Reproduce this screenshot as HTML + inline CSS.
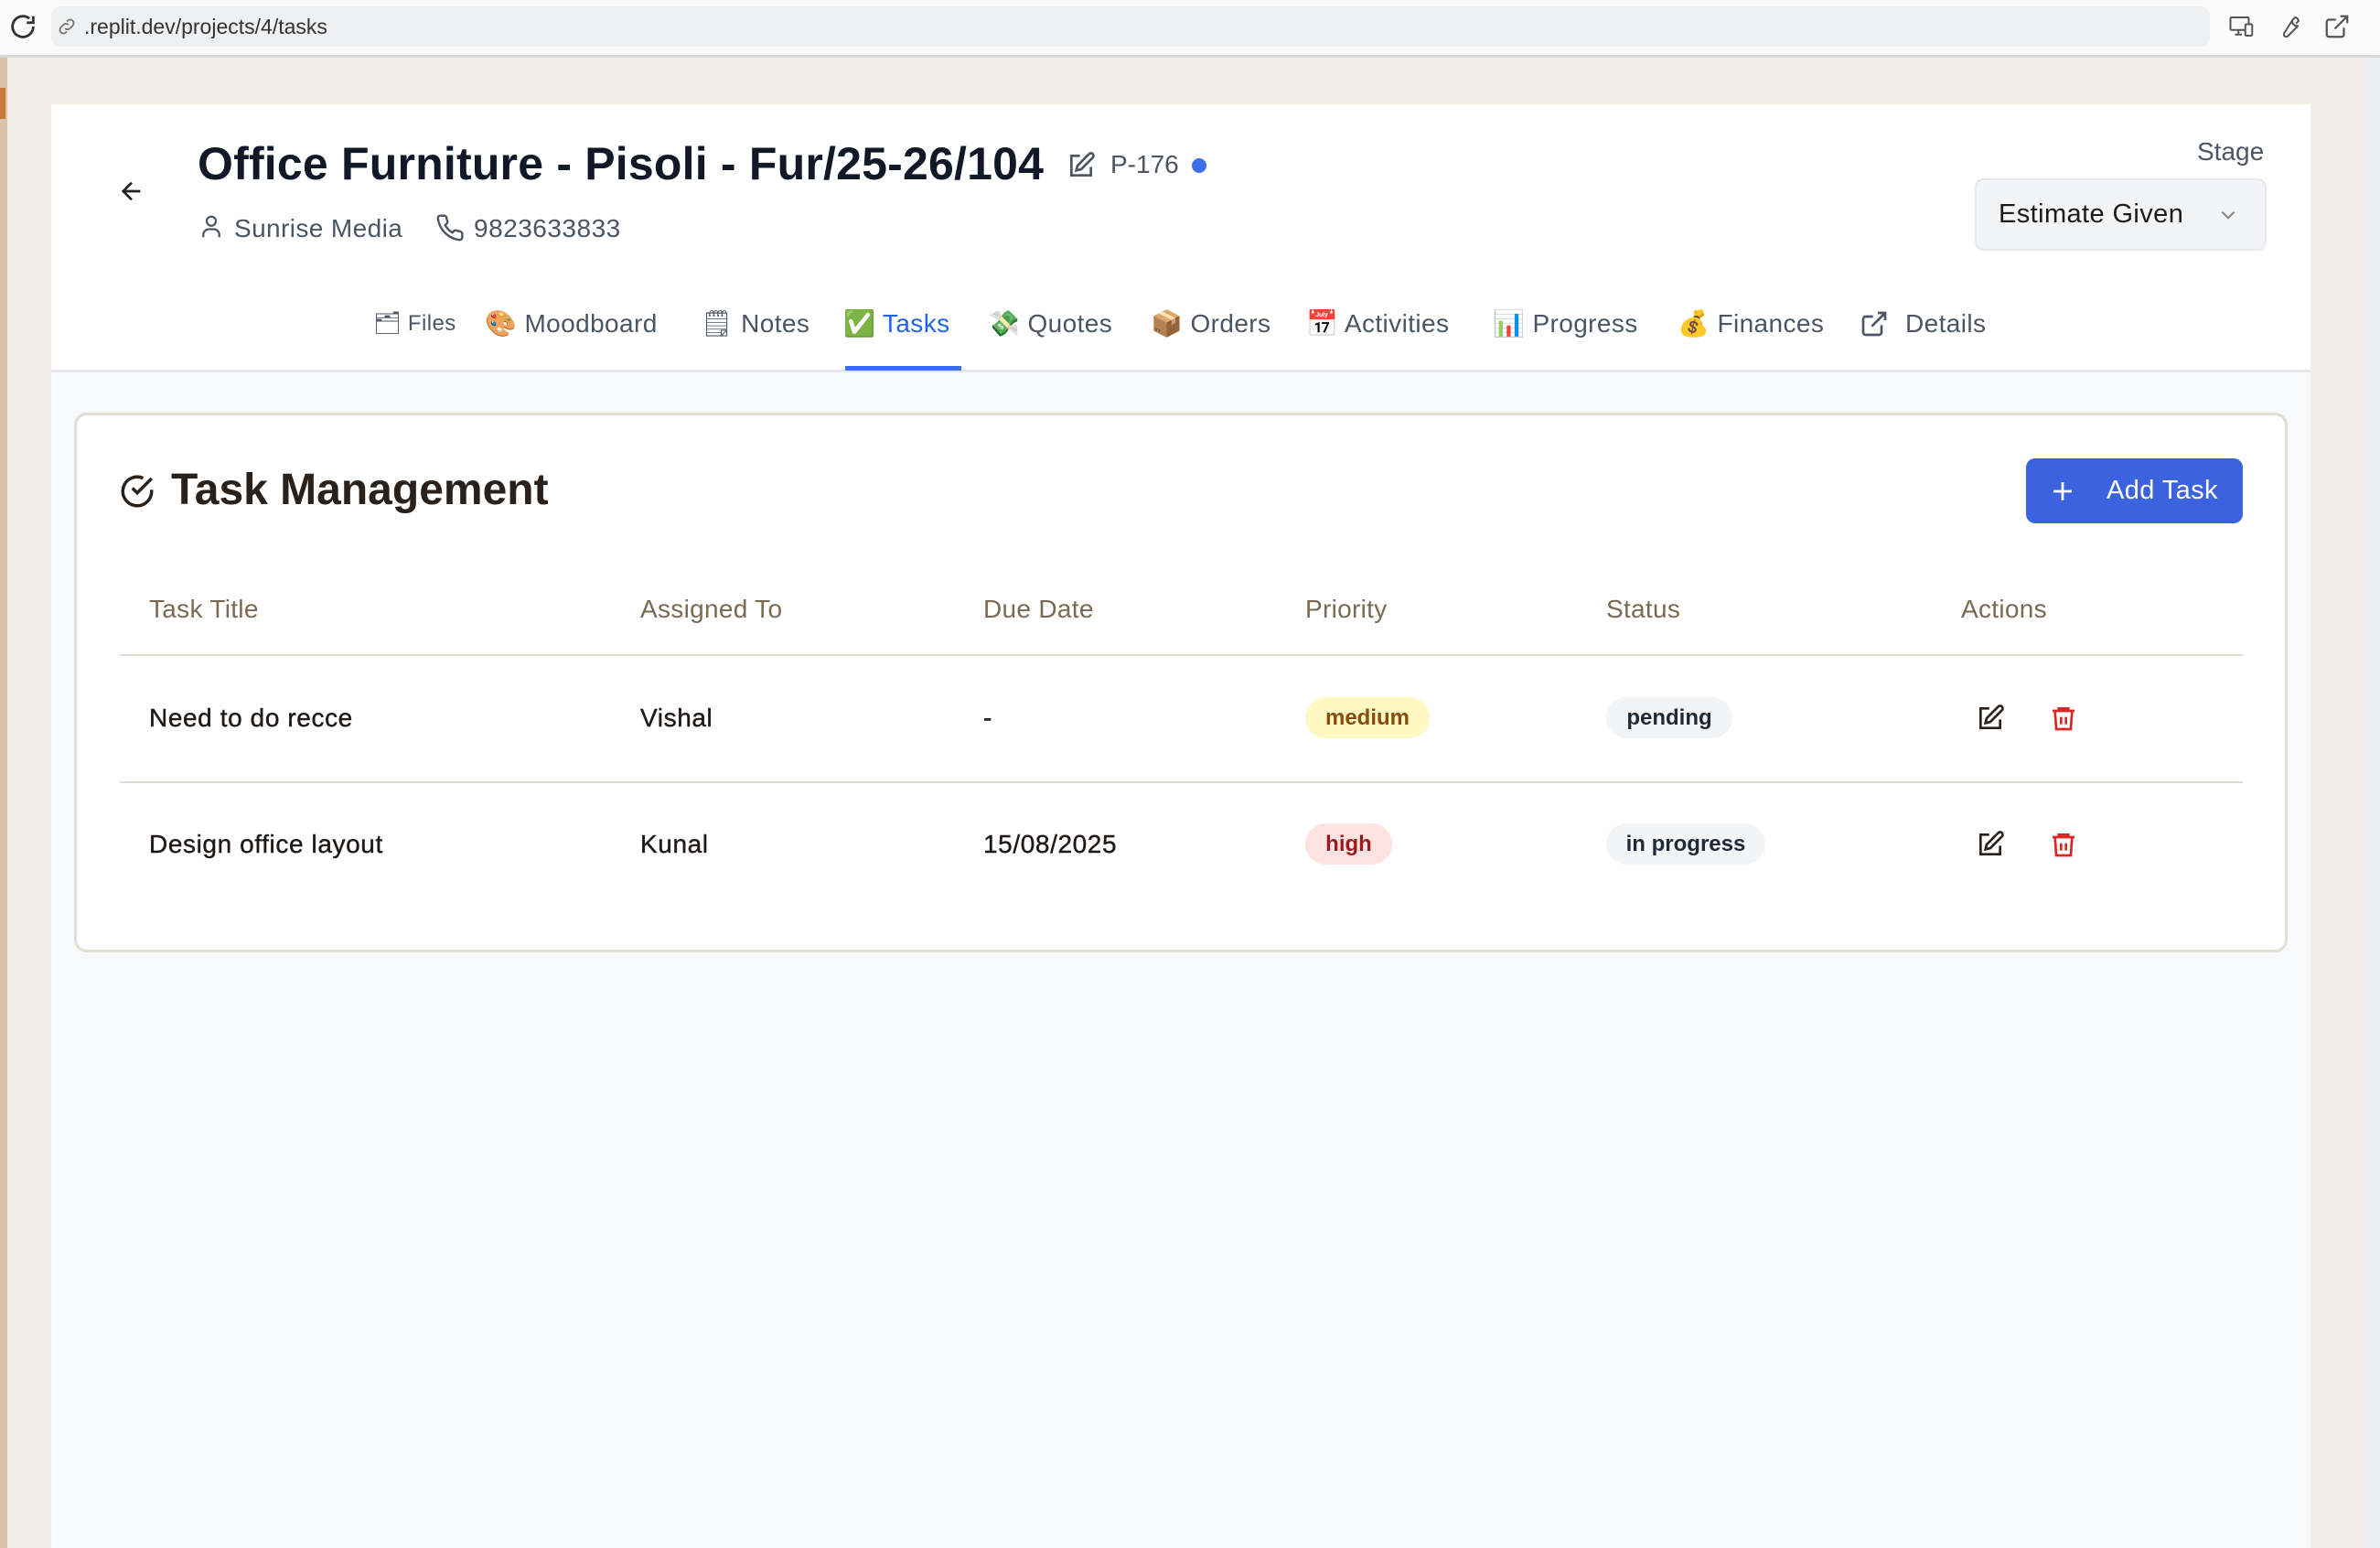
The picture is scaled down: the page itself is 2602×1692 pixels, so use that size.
<!DOCTYPE html>
<html><head><meta charset="utf-8"><style>
*{box-sizing:border-box;margin:0;padding:0}
body{width:2602px;height:1692px;overflow:hidden;background:#f3eee8;font-family:"Liberation Sans",sans-serif;position:relative;color:#1f1a17}
.abs{position:absolute}
.bar{left:0;top:0;width:2602px;height:63px;background:#fafafa;border-bottom:3px solid #d9d9d9}
.addr{left:56px;top:7px;width:2360px;height:44px;background:#eff0f2;border-radius:10px;font-size:23px;color:#333;line-height:44px;padding-left:36px}
.hdr{left:56px;top:114px;width:2470px;height:293px;background:#fff;border-bottom:3px solid #e5e7eb}
.grey{left:56px;top:407px;width:2470px;height:1285px;background:#f8f9fa}
.card{left:81px;top:451px;width:2420px;height:590px;background:#fff;border:3px solid #e3ded4;border-radius:14px}
.tab{top:336px;font-size:28px;color:#4b5563;line-height:36px;white-space:nowrap;letter-spacing:0.4px}
.th{top:650px;font-size:28px;color:#7b6a52;letter-spacing:0.3px}
.td{font-size:28px;color:#1f1a17;letter-spacing:0.6px;-webkit-text-stroke:0.4px #1f1a17}
.badge{height:45px;border-radius:23px;font-size:24px;font-weight:bold;line-height:45px;text-align:center}
</style></head><body>
<div class="abs bar"></div>
<svg class="abs" style="left:8px;top:12px" width="34" height="34" viewBox="0 0 24 24" fill="none" stroke="#333" stroke-width="2"><path d="M20 12a8 8 0 1 1-3-6.2M20 4v5h-5"/></svg>
<div class="abs addr">.replit.dev/projects/4/tasks</div>
<svg class="abs" style="left:62px;top:18px" width="22" height="22" viewBox="0 0 24 24" fill="none" stroke="#777" stroke-width="2"><path d="M10 14a4 4 0 0 0 6 0l3-3a4 4 0 0 0-6-6l-1 1M14 10a4 4 0 0 0-6 0l-3 3a4 4 0 0 0 6 6l1-1"/></svg>
<svg class="abs" style="left:2436px;top:14px" width="30" height="30" viewBox="0 0 24 24" fill="none" stroke="#555" stroke-width="1.6"><rect x="2" y="4" width="16" height="11" rx="1"/><path d="M6 19h6M9 15v4"/><rect x="15" y="10" width="6" height="10" rx="1" fill="#fafafa"/></svg>
<svg class="abs" style="left:2488px;top:14px" width="30" height="30" viewBox="0 0 24 24" fill="none" stroke="#555" stroke-width="1.6"><path d="M14.7 6.3a4 4 0 0 0 5 5l-9 9a2 2 0 0 1-3-3z M14.7 6.3 17 4a4 4 0 0 1 3 3l-2.3 2.3"/></svg>
<svg class="abs" style="left:2540px;top:14px" width="30" height="30" viewBox="0 0 24 24" fill="none" stroke="#555" stroke-width="1.8"><path d="M18 13v6a2 2 0 0 1-2 2H5a2 2 0 0 1-2-2V8a2 2 0 0 1 2-2h6M15 3h6v6M10 14 21 3"/></svg>
<div class="abs" style="left:2586px;top:63px;width:16px;height:1629px;background:#eceef4"></div>
<div class="abs" style="left:0;top:63px;width:8px;height:1629px;background:#d9c4a8"></div>
<div class="abs" style="left:0;top:96px;width:6px;height:34px;background:#c97a3a"></div>
<div class="abs hdr"></div>
<div class="abs grey"></div>
<svg class="abs" style="left:128px;top:193px" width="32" height="32" viewBox="0 0 24 24" fill="none" stroke="#222" stroke-width="2"><path d="M19 12H5M12 19l-7-7 7-7"/></svg>
<div class="abs" style="left:216px;top:150px;font-size:50px;font-weight:bold;color:#111827;white-space:nowrap;letter-spacing:0.2px">Office Furniture - Pisoli - Fur/25-26/104</div>
<svg class="abs" style="left:1166px;top:165px" width="32" height="32" viewBox="0 0 24 24" fill="none" stroke="#4b5563" stroke-width="2"><path d="M11 4H4v16h16v-7M18.5 2.5a2.1 2.1 0 0 1 3 3L12 15l-4 1 1-4z"/></svg>
<div class="abs" style="left:1214px;top:164px;font-size:28px;color:#4b5563">P-176</div>
<div class="abs" style="left:1303px;top:173px;width:16px;height:16px;border-radius:50%;background:#3b6ee8"></div>
<svg class="abs" style="left:216px;top:233px" width="30" height="30" viewBox="0 0 24 24" fill="none" stroke="#4b5563" stroke-width="1.8"><circle cx="12" cy="7" r="4"/><path d="M5 21v-2a5 5 0 0 1 5-5h4a5 5 0 0 1 5 5v2"/></svg>
<div class="abs" style="left:256px;top:234px;font-size:28px;color:#4b5563;letter-spacing:0.4px">Sunrise Media</div>
<svg class="abs" style="left:476px;top:233px" width="32" height="32" viewBox="0 0 24 24" fill="none" stroke="#4b5563" stroke-width="1.8"><path d="M22 16.9v3a2 2 0 0 1-2.2 2 19.8 19.8 0 0 1-8.6-3.1 19.5 19.5 0 0 1-6-6A19.8 19.8 0 0 1 2.1 4.2 2 2 0 0 1 4.1 2h3a2 2 0 0 1 2 1.7c.1 1 .4 1.9.7 2.8a2 2 0 0 1-.5 2.1L8 9.9a16 16 0 0 0 6 6l1.3-1.3a2 2 0 0 1 2.1-.4c.9.3 1.8.6 2.8.7a2 2 0 0 1 1.7 2z"/></svg>
<div class="abs" style="left:518px;top:234px;font-size:28px;color:#4b5563;letter-spacing:0.5px">9823633833</div>
<div class="abs" style="left:2402px;top:150px;font-size:28px;color:#4b5563">Stage</div>
<div class="abs" style="left:2159px;top:195px;width:319px;height:79px;background:#f3f4f6;border:2px solid #e5e7eb;border-radius:10px;font-size:29px;line-height:75px;padding-left:24px;color:#1f1a17;letter-spacing:0.4px">Estimate Given</div>
<svg class="abs" style="left:2423px;top:222px" width="26" height="26" viewBox="0 0 24 24" fill="none" stroke="#888" stroke-width="2"><path d="M6 9l6 6 6-6"/></svg>
<div class="abs tab" style="left:408px;font-size:24px">🗂 Files</div>
<div class="abs tab" style="left:530px">🎨 Moodboard</div>
<div class="abs tab" style="left:766px">🗒 Notes</div>
<div class="abs tab" style="left:922px;color:#2563eb">✅ Tasks</div>
<div class="abs" style="left:924px;top:400px;width:127px;height:5px;background:#3b6ee8"></div>
<div class="abs tab" style="left:1080px">💸 Quotes</div>
<div class="abs tab" style="left:1258px">📦 Orders</div>
<div class="abs tab" style="left:1428px">📅 Activities</div>
<div class="abs tab" style="left:1632px">📊 Progress</div>
<div class="abs tab" style="left:1834px">💰 Finances</div>
<svg class="abs" style="left:2033px;top:338px" width="32" height="32" viewBox="0 0 24 24" fill="none" stroke="#4b5563" stroke-width="2"><path d="M18 13v6a2 2 0 0 1-2 2H5a2 2 0 0 1-2-2V8a2 2 0 0 1 2-2h6M15 3h6v6M10 14 21 3"/></svg>
<div class="abs tab" style="left:2083px">Details</div>
<div class="abs card"></div>
<svg class="abs" style="left:129px;top:516px" width="42" height="42" viewBox="0 0 24 24" fill="none" stroke="#2a211b" stroke-width="2"><path d="M21 11.1V12a9 9 0 1 1-5.3-8.2"/><path d="M21 4 12 13l-3-3"/></svg>
<div class="abs" style="left:187px;top:508px;font-size:48px;font-weight:bold;color:#2a211b">Task Management</div>
<div class="abs" style="left:2215px;top:501px;width:237px;height:71px;background:#3b63e0;border-radius:10px;color:#fff;font-size:29px;line-height:71px;padding-left:88px;letter-spacing:0.4px">Add Task</div>
<svg class="abs" style="left:2240px;top:522px" width="30" height="30" viewBox="0 0 24 24" fill="none" stroke="#fff" stroke-width="2.2"><path d="M12 4v16M4 12h16"/></svg>
<div class="abs th" style="left:163px">Task Title</div>
<div class="abs th" style="left:700px">Assigned To</div>
<div class="abs th" style="left:1075px">Due Date</div>
<div class="abs th" style="left:1427px">Priority</div>
<div class="abs th" style="left:1756px">Status</div>
<div class="abs th" style="left:2144px">Actions</div>
<div class="abs" style="left:131px;top:715px;width:2321px;height:2px;background:#e0dcd3"></div>
<div class="abs" style="left:131px;top:854px;width:2321px;height:2px;background:#e0dcd3"></div>
<div class="abs td" style="left:163px;top:769px">Need to do recce</div>
<div class="abs td" style="left:700px;top:769px">Vishal</div>
<div class="abs td" style="left:1075px;top:769px">-</div>
<div class="abs badge" style="left:1427px;top:762px;width:136px;background:#fef9c3;color:#854d0e">medium</div>
<div class="abs badge" style="left:1756px;top:762px;width:138px;background:#f3f4f6;color:#1f2937">pending</div>
<div class="abs td" style="left:163px;top:907px">Design office layout</div>
<div class="abs td" style="left:700px;top:907px">Kunal</div>
<div class="abs td" style="left:1075px;top:907px">15/08/2025</div>
<div class="abs badge" style="left:1427px;top:900px;width:95px;background:#fde2e2;color:#991b1b">high</div>
<div class="abs badge" style="left:1756px;top:900px;width:174px;background:#f3f4f6;color:#1f2937">in progress</div>
<svg class="abs" style="left:2160px;top:769px" width="32" height="32" viewBox="0 0 24 24" fill="none" stroke="#2a211b" stroke-width="2"><path d="M11 4H4v16h16v-7M18.5 2.5a2.1 2.1 0 0 1 3 3L12 15l-4 1 1-4z"/></svg>
<svg class="abs" style="left:2240px;top:769px" width="32" height="32" viewBox="0 0 24 24" fill="none" stroke="#dc2626" stroke-width="2"><path d="M3 6h18M8 6V4h8v2M5 6l1 15h12l1-15M10 11v6M14 11v6"/></svg>
<svg class="abs" style="left:2160px;top:907px" width="32" height="32" viewBox="0 0 24 24" fill="none" stroke="#2a211b" stroke-width="2"><path d="M11 4H4v16h16v-7M18.5 2.5a2.1 2.1 0 0 1 3 3L12 15l-4 1 1-4z"/></svg>
<svg class="abs" style="left:2240px;top:907px" width="32" height="32" viewBox="0 0 24 24" fill="none" stroke="#dc2626" stroke-width="2"><path d="M3 6h18M8 6V4h8v2M5 6l1 15h12l1-15M10 11v6M14 11v6"/></svg>
</body></html>
